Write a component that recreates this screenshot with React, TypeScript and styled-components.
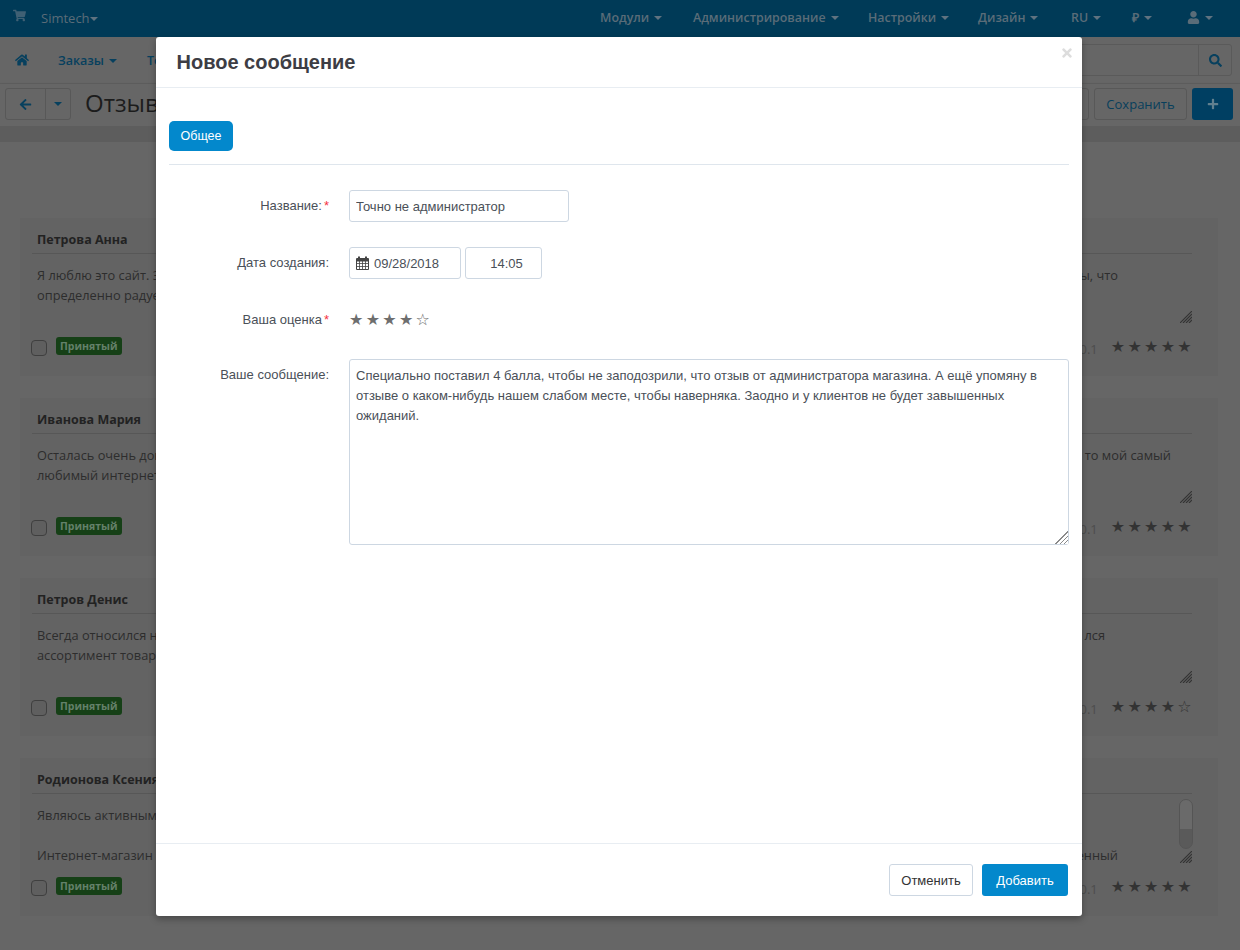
import React, { FC } from 'react';
import styled, { createGlobalStyle } from 'styled-components';
import { FaArrowLeft, FaHome, FaPlus, FaSearch, FaShoppingCart, FaTimes, FaUser } from 'react-icons/fa';

const GlobalStyle = createGlobalStyle`
  html, body {
    margin: 0;
    padding: 0;
    height: 950px;
    overflow: hidden;
    background: #666666;
  }
  * { box-sizing: border-box; }
`;

type Review = {
    name: string
    lines: [string, string][]
    rightPad: number
    stars: number
    scroll?: boolean
}

const reviews: Review[] = [
    {
        name: 'Петрова Анна',
        lines: [['Я люблю это сайт. Здесь', 'ы, что'], ['определенно радует', '']],
        rightPad: 74,
        stars: 5,
    },
    {
        name: 'Иванова Мария',
        lines: [['Осталась очень довольна', 'то мой самый'], ['любимый интернет', '']],
        rightPad: 21,
        stars: 5,
    },
    {
        name: 'Петров Денис',
        lines: [['Всегда относился настороженно', 'лся'], ['ассортимент товаров', '']],
        rightPad: 87,
        stars: 4,
    },
    {
        name: 'Родионова Ксения',
        lines: [['Являюсь активным покупателем', ''], ['', ''], ['Интернет-магазин с', 'енный']],
        rightPad: 74,
        stars: 5,
        scroll: true,
    },
];

const Stars: FC<{ count: number }> = ({ count }) => (
    <>{[1, 2, 3, 4, 5].map(i => (i <= count ? '★' : '☆')).join('')}</>
);

const ResizeHandle: FC = () => (
    <HandleBox viewBox="0 0 12 12" width="12" height="12">
        <path d="M0 12L12 0M3 12L12 3M6 12L12 6M9 12L12 9" stroke="#333" strokeWidth="1.1" fill="none" />
    </HandleBox>
);

const CalendarIcon: FC = () => (
    <svg width="13" height="14" viewBox="0 0 13 14">
        <path d="M.5 2.5h12v11H.5z" fill="none" stroke="#444" />
        <path d="M.5 3h12v2.5H.5z" fill="#444" />
        <path d="M3.5 5v8M6.5 5v8M9.5 5v8M1 7.5h11M1 10.5h11" stroke="#444" strokeWidth=".8" />
        <path d="M3 .5v3M10 .5v3" stroke="#444" strokeWidth="2" />
    </svg>
);

const App: FC = () => {
    return (
        <Page>
            <GlobalStyle />
            <TopBar>
                <CartIcon><FaShoppingCart size={13} /></CartIcon>
                <Brand>Simtech<BrandCaret /></Brand>
                <TopMenu>
                    <TopItem $w={93}>Модули<Caret /></TopItem>
                    <TopItem $w={175}>Администрирование<Caret /></TopItem>
                    <TopItem $w={110}>Настройки<Caret /></TopItem>
                    <TopItem $w={93}>Дизайн<Caret /></TopItem>
                    <TopItem $w={61}>RU<Caret /></TopItem>
                    <TopItem $w={55}>₽<Caret /></TopItem>
                    <TopItem $w={45}><FaUser size={13} /><Caret /></TopItem>
                </TopMenu>
            </TopBar>
            <NavBar>
                <FaHome size={14} />
                <NavLink>Заказы<Caret $blue /></NavLink>
                <NavLink>Товары<Caret $blue /></NavLink>
                <SearchBox>
                    <SearchInput />
                    <SearchButton><FaSearch size={13} /></SearchButton>
                </SearchBox>
            </NavBar>
            <ToolBar>
                <BackGroup>
                    <BackButton><FaArrowLeft size={13} /></BackButton>
                    <BackMenu><Caret $blue /></BackMenu>
                </BackGroup>
                <PageTitle>Отзывы</PageTitle>
                <ToolSpacer />
                <ToolButton $w={60}>Ещё</ToolButton>
                <ToolButton $w={93}>Сохранить</ToolButton>
                <PlusButton><FaPlus size={12} /></PlusButton>
            </ToolBar>
            <Band />
            <ReviewList>
                {reviews.map(r => (
                    <ReviewCard key={r.name}>
                        <ReviewName>{r.name}</ReviewName>
                        <ReviewText>
                            <ReviewLines>
                                {r.lines.map((line, i) => (
                                    <ReviewLine key={i} $pad={r.rightPad}>
                                        <span>{line[0]}</span>
                                        <span>{line[1]}</span>
                                    </ReviewLine>
                                ))}
                            </ReviewLines>
                            {r.scroll && <ScrollThumb />}
                            <ResizeHandle />
                        </ReviewText>
                        <ReviewFooter>
                            <FakeCheck />
                            <StatusBadge>Принятый</StatusBadge>
                            <ReviewIp>127.0.0.1</ReviewIp>
                            <ReviewStars><Stars count={r.stars} /></ReviewStars>
                        </ReviewFooter>
                    </ReviewCard>
                ))}
            </ReviewList>

            <Modal>
                <ModalHeader>
                    <ModalTitle>Новое сообщение</ModalTitle>
                    <CloseIcon><FaTimes size={14} /></CloseIcon>
                </ModalHeader>
                <ModalBody>
                    <Tabs>
                        <TabButton>Общее</TabButton>
                    </Tabs>
                    <FormRow>
                        <FieldLabel>Название:<Req>*</Req></FieldLabel>
                        <TextInput $w={220} readOnly value="Точно не администратор" />
                    </FormRow>
                    <FormRow>
                        <FieldLabel>Дата создания:</FieldLabel>
                        <DateBox><CalendarIcon />09/28/2018</DateBox>
                        <TimeBox>14:05</TimeBox>
                    </FormRow>
                    <FormRow $h={30}>
                        <FieldLabel $rating>Ваша оценка<Req>*</Req></FieldLabel>
                        <RatingStars><Stars count={4} /></RatingStars>
                    </FormRow>
                    <FormRow $top>
                        <FieldLabel $top>Ваше сообщение:</FieldLabel>
                        <MessageArea
                            readOnly
                            value="Специально поставил 4 балла, чтобы не заподозрили, что отзыв от администратора магазина. А ещё упомяну в отзыве о каком-нибудь нашем слабом месте, чтобы наверняка. Заодно и у клиентов не будет завышенных ожиданий."
                        />
                    </FormRow>
                </ModalBody>
                <ModalFooter>
                    <CancelButton>Отменить</CancelButton>
                    <SubmitButton>Добавить</SubmitButton>
                </ModalFooter>
            </Modal>
        </Page>
    );
};

export default App;

const Page = styled.div`
  position: relative;
  width: 1240px;
  height: 950px;
  overflow: hidden;
  background: #666666;
  font-family: "Open Sans", "Liberation Sans", sans-serif;
  font-size: 13px;
`;

const Caret = styled.i<{ $blue?: boolean }>`
  display: inline-block;
  width: 0;
  height: 0;
  margin-left: 5px;
  vertical-align: 2px;
  border-left: 4px solid transparent;
  border-right: 4px solid transparent;
  border-top: 4px solid ${p => (p.$blue ? '#07405e' : '#5f7280')};
`;

const BrandCaret = styled(Caret)`
  margin-left: 0;
`;

const TopBar = styled.div`
  display: flex;
  align-items: center;
  height: 37px;
  padding: 0 0 2px 13px;
  background: #003a57;
  color: #5a6c78;
`;

const CartIcon = styled.span`
  display: flex;
  width: 28px;
  margin-top: -4px;
  color: #3f6074;
`;

const Brand = styled.span`
  font-size: 13px;
`;

const TopMenu = styled.div`
  display: flex;
  margin-left: auto;
  margin-right: 8px;
`;

const TopItem = styled.span<{ $w: number }>`
  display: flex;
  align-items: center;
  width: ${p => p.$w}px;
  font-size: 12.4px;
  font-weight: 600;
  white-space: nowrap;

  i { vertical-align: 0; }
`;

const NavBar = styled.div`
  display: flex;
  align-items: center;
  height: 47px;
  padding: 0 8px 0 15px;
  background: #666666;
  border-bottom: 1px solid #5f5f5f;
  color: #07405e;
`;

const NavLink = styled.span`
  font-size: 12.5px;
  font-weight: 600;
  margin-left: 29px;
  width: 60px;
  white-space: nowrap;
`;

const SearchBox = styled.div`
  display: flex;
  margin-left: auto;
  width: 300px;
  height: 32px;
  border: 1px solid #5a5a5a;
  border-radius: 3px;
`;

const SearchInput = styled.div`
  flex: 1;
`;

const SearchButton = styled.span`
  display: flex;
  align-items: center;
  justify-content: center;
  width: 33px;
  border-left: 1px solid #5a5a5a;
  color: #07405e;
`;

const ToolBar = styled.div`
  display: flex;
  align-items: center;
  gap: 5px;
  height: 42px;
  padding: 0 7px 2px 5px;
  background: #666666;
  box-shadow: 0 1px 3px rgba(0, 0, 0, 0.15);
`;

const BackGroup = styled.div`
  display: flex;
  height: 32px;
  border: 1px solid #585858;
  border-radius: 3px;
`;

const BackButton = styled.span`
  display: flex;
  align-items: center;
  justify-content: center;
  width: 40px;
  border-right: 1px solid #585858;
  color: #07405e;
`;

const BackMenu = styled.span`
  display: flex;
  align-items: center;
  justify-content: center;
  width: 24px;

  i { margin-left: 0; }
`;

const PageTitle = styled.h1`
  margin: -4px 0 0 9px;
  font-size: 24px;
  font-weight: 400;
  color: #1c1c1c;
`;

const ToolSpacer = styled.div`
  flex: 1;
`;

const ToolButton = styled.span<{ $w: number }>`
  display: flex;
  align-items: center;
  justify-content: center;
  width: ${p => p.$w}px;
  height: 32px;
  border: 1px solid #585858;
  border-radius: 3px;
  color: #083f5c;
`;

const PlusButton = styled.span`
  display: flex;
  align-items: center;
  justify-content: center;
  width: 41px;
  height: 32px;
  border-radius: 3px;
  background: #003f62;
  color: #61808f;
`;

const Band = styled.div`
  height: 16px;
  background: #5d5d5d;
`;

const ReviewList = styled.div`
  display: flex;
  flex-direction: column;
  gap: 22px;
  padding: 76px 22px 0 20px;
`;

const ReviewCard = styled.div`
  height: 158px;
  padding: 11px 26px 0 12px;
  background: #636363;
`;

const ReviewName = styled.div`
  height: 25px;
  padding: 0 0 0 5px;
  border-bottom: 1px solid #575757;
  font-size: 12.5px;
  line-height: 22px;
  font-weight: 700;
  color: #222222;
  white-space: nowrap;
`;

const ReviewText = styled.div`
  position: relative;
  height: 79px;
  color: #2d2d2d;
  font-size: 12.8px;
  line-height: 20px;
`;

const ReviewLines = styled.div`
  height: 67px;
  padding: 11px 0 0 5px;
  overflow: hidden;
`;

const ReviewLine = styled.div<{ $pad: number }>`
  display: flex;
  justify-content: space-between;
  height: 20px;
  padding-right: ${p => p.$pad}px;
  white-space: nowrap;
`;

const HandleBox = styled.svg`
  position: absolute;
  right: 0;
  bottom: 10px;
`;

const ScrollThumb = styled.div`
  position: absolute;
  right: -1px;
  top: 5px;
  width: 14px;
  height: 50px;
  border: 1px solid #555555;
  border-radius: 7px;
  background: linear-gradient(#6a6a6a 0 60%, #5a5a5a 60%);
`;

const ReviewFooter = styled.div`
  display: flex;
  align-items: center;
  height: 32px;
  margin-top: -3px;
`;

const FakeCheck = styled.span`
  width: 16px;
  height: 16px;
  margin: 4px 9px 0 -1px;
  border: 1px solid #3f3f3f;
  border-radius: 4px;
  background: #5f5f5f;
`;

const StatusBadge = styled.span`
  display: inline-block;
  height: 18px;
  padding: 0 4px;
  border-radius: 3px;
  background: #164017;
  color: #64816a;
  font-size: 10.5px;
  line-height: 18px;
  font-weight: 700;
`;

const ReviewIp = styled.span`
  margin-left: auto;
  margin-top: 6px;
  color: #4d4d4d;
  font-size: 13px;
`;

const ReviewStars = styled.span`
  margin-left: 13px;
  margin-right: -2px;
  color: #333333;
  font-family: "DejaVu Sans", sans-serif;
  font-size: 16px;
  letter-spacing: 2.3px;
`;

const Modal = styled.div`
  position: absolute;
  left: 156px;
  top: 37px;
  display: flex;
  flex-direction: column;
  width: 926px;
  height: 879px;
  border-radius: 3px;
  background: #ffffff;
  box-shadow: 0 3px 7px rgba(0, 0, 0, 0.3);
  font-family: "Liberation Sans", Arial, sans-serif;
  font-size: 13px;
  color: #4a5058;
`;

const ModalHeader = styled.div`
  position: relative;
  height: 51px;
  padding: 0 21px 0 20.5px;
  border-bottom: 1px solid #e8edf2;
`;

const ModalTitle = styled.h3`
  margin: 0;
  font-size: 20px;
  line-height: 50px;
  font-weight: 700;
  color: #3d3d44;
`;

const CloseIcon = styled.span`
  position: absolute;
  top: 9px;
  right: 8px;
  color: #dddddd;
`;

const ModalBody = styled.div`
  flex: 1;
  padding: 33px 13px 0;
`;

const Tabs = styled.div`
  display: flex;
  height: 44px;
  margin-bottom: 25px;
  border-bottom: 1px solid #dfe6ed;
`;

const TabButton = styled.span`
  display: flex;
  align-items: center;
  justify-content: center;
  width: 64px;
  height: 30px;
  border-radius: 5px;
  background: #0388cc;
  color: #ffffff;
  font-size: 12.5px;
`;

const FormRow = styled.div<{ $h?: number; $top?: boolean }>`
  display: flex;
  align-items: ${p => (p.$top ? 'flex-start' : 'center')};
  gap: 4px;
  min-height: ${p => p.$h ?? 32}px;
  margin-bottom: 25px;
`;

const FieldLabel = styled.label<{ $top?: boolean; $rating?: boolean }>`
  flex: none;
  width: 176px;
  padding: ${p => (p.$top ? '8px 16px 0 0' : p.$rating ? '0 16px 0 0' : '0 16px 2px 0')};
  text-align: right;
`;

const Req = styled.span`
  color: #f5333f;
  margin-left: 2px;
`;

const TextInput = styled.input<{ $w: number }>`
  width: ${p => p.$w}px;
  height: 32px;
  padding: 0 6px;
  border: 1px solid #cdd7e2;
  border-radius: 3px;
  outline: none;
  font: inherit;
  color: inherit;
`;

const DateBox = styled.div`
  display: flex;
  align-items: center;
  gap: 5px;
  width: 112px;
  height: 32px;
  padding: 0 6px;
  border: 1px solid #cdd7e2;
  border-radius: 3px;
`;

const TimeBox = styled.div`
  display: flex;
  align-items: center;
  justify-content: center;
  width: 77px;
  height: 32px;
  padding-left: 6px;
  border: 1px solid #cdd7e2;
  border-radius: 3px;
`;

const RatingStars = styled.span`
  color: #6e6e6e;
  font-family: "DejaVu Sans", sans-serif;
  font-size: 16px;
  letter-spacing: 2.3px;
`;

const MessageArea = styled.textarea`
  width: 720px;
  height: 186px;
  padding: 6px;
  border: 1px solid #cdd7e2;
  border-radius: 3px;
  outline: none;
  font: inherit;
  line-height: 20px;
  color: inherit;

  &::-webkit-resizer {
    background:
      linear-gradient(135deg, #ffffff 50%, transparent 50%),
      repeating-linear-gradient(135deg, #8a8a8a 0 1px, #ffffff 1px 3px);
  }
`;

const ModalFooter = styled.div`
  display: flex;
  justify-content: flex-end;
  gap: 9px;
  height: 73px;
  padding: 20px 14px 0 0;
  border-top: 1px solid #e8edf2;
`;

const CancelButton = styled.span`
  display: flex;
  align-items: center;
  justify-content: center;
  width: 84px;
  height: 32px;
  border: 1px solid #cdd7e2;
  border-radius: 3px;
  color: #333333;
`;

const SubmitButton = styled.span`
  display: flex;
  align-items: center;
  justify-content: center;
  width: 86px;
  height: 32px;
  border-radius: 3px;
  background: #0388cc;
  color: #ffffff;
`;
